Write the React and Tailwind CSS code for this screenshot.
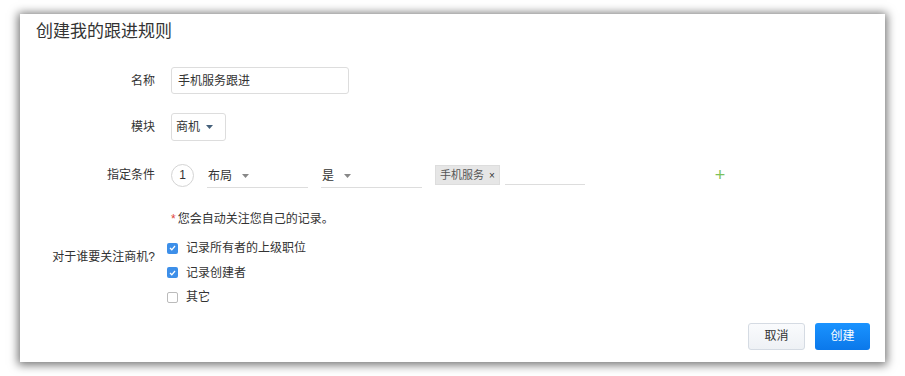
const FONT = "font-['Liberation_Sans','Noto_Sans_CJK_SC',sans-serif]";

function Caret({ className = "" }) {
  return (
    <svg width="7" height="4" viewBox="0 0 7 4" className={className}>
      <path d="M0 0h7L3.5 4z" fill="currentColor" />
    </svg>
  );
}

function Check({ checked, label }) {
  return (
    <div className="flex items-center h-[24.5px]">
      {checked ? (
        <span className="w-[11px] h-[11px] rounded-[2px] bg-[#3d8fe9] flex items-center justify-center">
          <svg width="7" height="6" viewBox="0 0 7 6">
            <path d="M1 3l1.8 1.8L6 1" stroke="#fff" strokeWidth="1.3" fill="none" />
          </svg>
        </span>
      ) : (
        <span className="w-[11px] h-[11px] rounded-[2px] border border-[#bbb] bg-white" />
      )}
      <span className="ml-[8px] text-[12px] text-[#333]">{label}</span>
    </div>
  );
}

function Row({ label, children, className = "" }) {
  return (
    <div className={`flex items-center ${className}`}>
      <div className="w-[135px] text-right text-[12px] text-[#333]">{label}</div>
      <div className="ml-[16px] flex items-center">{children}</div>
    </div>
  );
}

export default function App() {
  return (
    <div className={`w-[905px] h-[376px] bg-white pt-[14px] pl-[20px] ${FONT}`}>
      <div className="w-[865px] h-[348px] bg-white shadow-[0_1px_9px_2px_rgba(0,0,0,0.55)] flex flex-col">
        <div className="pl-[16px] pt-[6px] h-[30px] text-[17px] leading-[24px] text-[#333]">创建我的跟进规则</div>

        <Row label="名称" className="mt-[23px]">
          <div className="w-[178px] h-[27px] border border-[#ddd] rounded-[3px] flex items-center pl-[6px] text-[12px] text-[#333]">
            手机服务跟进
          </div>
        </Row>

        <Row label="模块" className="mt-[19px]">
          <div className="w-[55px] h-[28px] border border-[#ddd] rounded-[3px] flex items-center pl-[4px] text-[12px] text-[#333]">
            商机
            <Caret className="ml-[6px] text-[#45607a]" />
          </div>
        </Row>

        <Row label="指定条件" className="mt-[22px] h-[24px]">
          <div className="w-[23px] h-[23px] rounded-full border border-[#d4d4d4] flex items-center justify-center text-[12px] text-[#333]">
            1
          </div>
          <div className="ml-[13px] w-[101px] h-[24px] border-b border-[#ddd] flex items-center pl-[1px] text-[12px] text-[#333] mt-[2px]">
            布局
            <Caret className="ml-[10px] text-[#888]" />
          </div>
          <div className="ml-[13px] w-[101px] h-[24px] border-b border-[#ddd] flex items-center pl-[1px] text-[12px] text-[#333] mt-[2px]">
            是
            <Caret className="ml-[10px] text-[#888]" />
          </div>
          <div className="ml-[13px] flex items-end">
            <div className="h-[20px] px-[4px] bg-[#e6e6e6] border border-[#ddd] flex items-center text-[11px] text-[#555]">
              手机服务
              <span className="ml-[5px] text-[10px] text-[#333]">×</span>
            </div>
            <div className="ml-[5px] w-[80px] h-[20px] border-b border-[#ddd]" />
          </div>
          <span className="ml-[130px] text-[#7cc25a] text-[18px] leading-none font-light">+</span>
        </Row>

        <div className="ml-[151px] mt-[23px] h-[18px] flex items-center text-[12px] text-[#333]">
          <span className="text-[#e0443a] mr-[2px]">*</span>您会自动关注您自己的记录。
        </div>

        <div className="flex mt-[8px]">
          <div className="w-[135px] pt-[12px] text-right text-[12px] text-[#333]">对于谁要关注商机?</div>
          <div className="ml-[12px] flex flex-col">
            <Check checked label="记录所有者的上级职位" />
            <Check checked label="记录创建者" />
            <Check label="其它" />
          </div>
        </div>

        <div className="mt-[13px] pr-[15px] flex justify-end gap-[10px]">
          <button className="w-[57px] h-[27px] rounded-[3px] border border-[#d5dbe3] bg-gradient-to-b from-[#fafbfd] to-[#eef1f5] text-[12px] text-[#333]">
            取消
          </button>
          <button className="w-[55px] h-[27px] rounded-[3px] bg-gradient-to-b from-[#1a93ff] to-[#0b78ea] text-[12px] text-white">
            创建
          </button>
        </div>
      </div>
    </div>
  );
}
